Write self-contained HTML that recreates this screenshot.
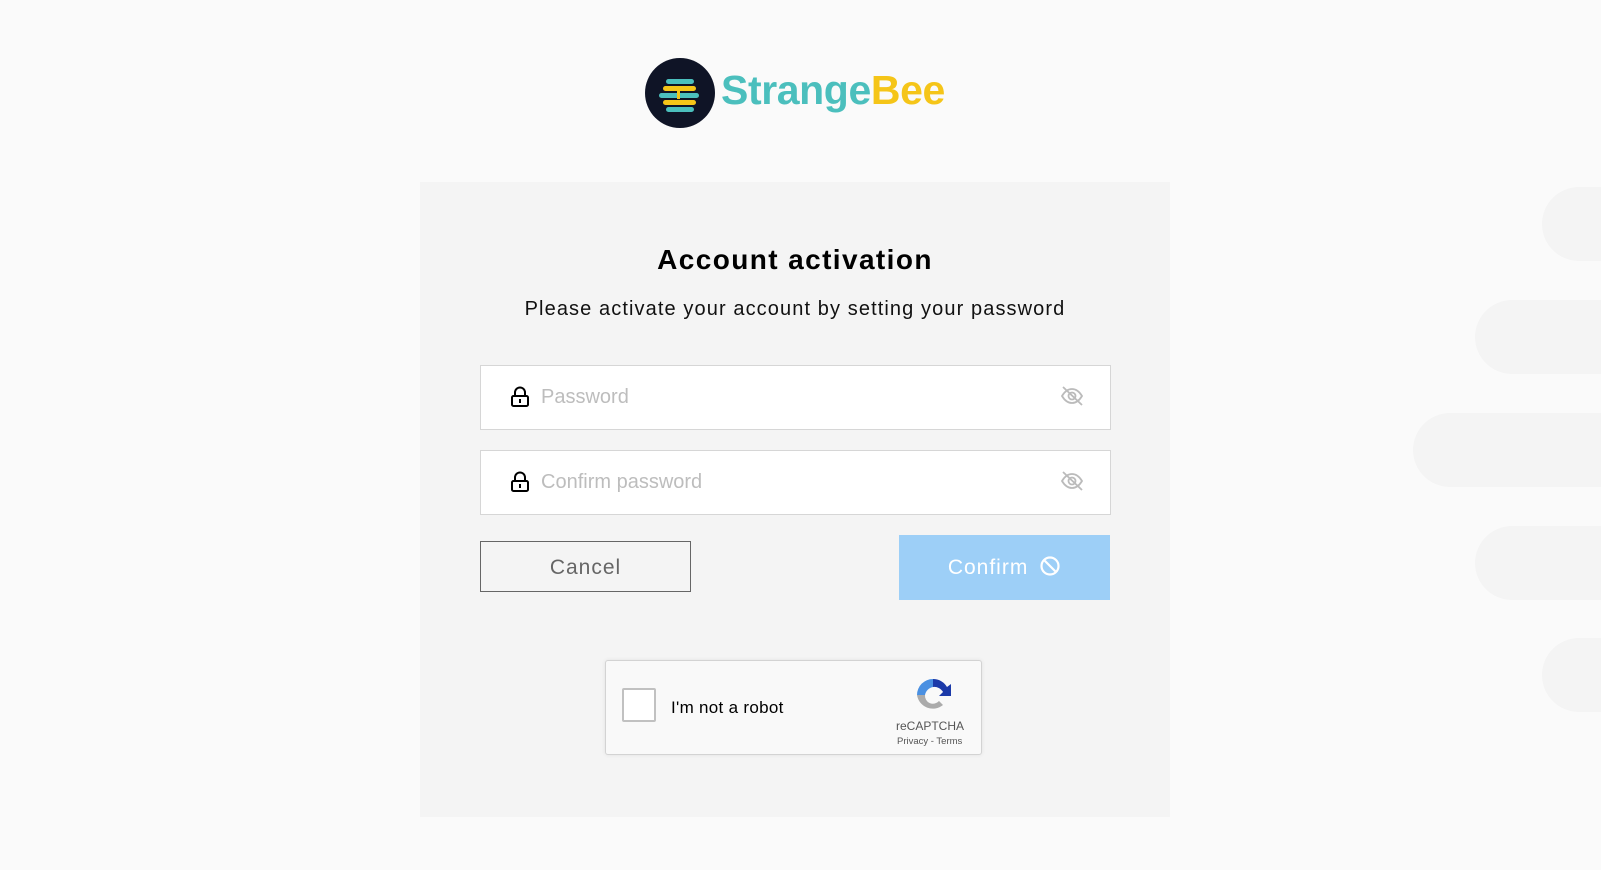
<!DOCTYPE html>
<html><head><meta charset="utf-8"><style>
html,body{margin:0;padding:0;width:1601px;height:870px;overflow:hidden;background:#fafafa;font-family:"Liberation Sans",sans-serif;position:relative}
.sh{position:absolute;background:#f4f4f4;border-radius:37px 0 0 37px;right:0;height:74px}
.card{position:absolute;left:420px;top:182px;width:750px;height:635px;background:#f4f4f4}
.abs{position:absolute}
h1{position:absolute;left:420px;width:750px;top:244px;margin:0;text-align:center;font-size:28px;font-weight:bold;color:#000;letter-spacing:1.4px}
.sub{position:absolute;left:420px;width:750px;top:298px;text-align:center;font-size:20px;color:#111;letter-spacing:1.1px}
.inp{position:absolute;left:480px;width:629px;height:63px;background:#fff;border:1px solid #d6d6d6}
.inp span{position:absolute;left:60px;top:20px;font-size:20px;color:#bdbdbd}
.inp .lock{position:absolute;left:29px;top:20px}
.inp .eye{position:absolute;left:579px;top:20px}
</style></head><body>
<div class="sh" style="top:187px;width:59px"></div>
<div class="sh" style="top:300px;width:126px"></div>
<div class="sh" style="top:413px;width:188px"></div>
<div class="sh" style="top:526px;width:126px"></div>
<div class="sh" style="top:638px;width:59px"></div>

<svg class="abs" style="left:644px;top:57px" width="72" height="72" viewBox="0 0 72 72">
<circle cx="36" cy="36" r="35" fill="#0f1426"/>
<rect x="22" y="22" width="28" height="5" rx="2.5" fill="#4bbfbd"/>
<rect x="19" y="29" width="33" height="5" rx="2.5" fill="#f5c518"/>
<rect x="15" y="36" width="40" height="5" rx="2.5" fill="#4bbfbd"/>
<rect x="19" y="43" width="33" height="5" rx="2.5" fill="#f5c518"/>
<rect x="22" y="50" width="28" height="5" rx="2.5" fill="#4bbfbd"/>
<rect x="33" y="33" width="3" height="9" fill="#f5c518"/>
</svg>
<div class="abs" style="left:721px;top:67px;font-size:41px;font-weight:bold;letter-spacing:-0.4px"><span style="color:#4bbfbd">Strange</span><span style="color:#f5c518">Bee</span></div>

<div class="card"></div>
<h1>Account activation</h1>
<div class="sub">Please activate your account by setting your password</div>

<div class="inp" style="top:365px">
<svg class="lock" width="20" height="22" viewBox="0 0 20 22"><path d="M5 10V6.5a5 5 0 0 1 10 0V10" fill="none" stroke="#000" stroke-width="2"/><rect x="2" y="10" width="16" height="10" rx="1.5" fill="none" stroke="#000" stroke-width="2"/><rect x="9" y="13" width="2" height="4" fill="#000"/></svg>
<span>Password</span>
<svg class="eye" width="24" height="20" viewBox="0 0 24 20"><path d="M2 10c3-5 6-7 10-7s7 2 10 7c-3 5-6 7-10 7s-7-2-10-7z" fill="none" stroke="#bbb" stroke-width="1.8"/><circle cx="12" cy="10" r="3.5" fill="none" stroke="#bbb" stroke-width="1.8"/><path d="M3 1l19 18" stroke="#bbb" stroke-width="1.8"/></svg>
</div>
<div class="inp" style="top:450px">
<svg class="lock" width="20" height="22" viewBox="0 0 20 22"><path d="M5 10V6.5a5 5 0 0 1 10 0V10" fill="none" stroke="#000" stroke-width="2"/><rect x="2" y="10" width="16" height="10" rx="1.5" fill="none" stroke="#000" stroke-width="2"/><rect x="9" y="13" width="2" height="4" fill="#000"/></svg>
<span>Confirm password</span>
<svg class="eye" width="24" height="20" viewBox="0 0 24 20"><path d="M2 10c3-5 6-7 10-7s7 2 10 7c-3 5-6 7-10 7s-7-2-10-7z" fill="none" stroke="#bbb" stroke-width="1.8"/><circle cx="12" cy="10" r="3.5" fill="none" stroke="#bbb" stroke-width="1.8"/><path d="M3 1l19 18" stroke="#bbb" stroke-width="1.8"/></svg>
</div>

<div class="abs" style="left:480px;top:541px;width:209px;height:49px;border:1px solid #666;text-align:center;line-height:51px;font-size:21px;color:#666;letter-spacing:1px">Cancel</div>
<div class="abs" style="left:899px;top:535px;width:211px;height:65px;background:#9dcff7;color:#fff;font-size:21px;line-height:65px;text-align:center;letter-spacing:1px">Confirm <svg width="22" height="22" viewBox="0 0 22 22" style="vertical-align:-3px;margin-left:4px"><circle cx="11" cy="11" r="8.5" fill="none" stroke="#fff" stroke-width="2.2"/><path d="M5 5l12 12" stroke="#fff" stroke-width="2.2"/></svg></div>

<div class="abs" style="left:605px;top:660px;width:375px;height:93px;background:#f9f9f9;border:1px solid #d3d3d3;border-radius:3px;box-shadow:0 0 4px rgba(0,0,0,.08)">
<div class="abs" style="left:16px;top:27px;width:30px;height:30px;background:#fff;border:2px solid #c1c1c1;border-radius:2px"></div>
<div class="abs" style="left:65px;top:37px;font-size:17px;color:#000;letter-spacing:0.3px">I'm not a robot</div>
<svg class="abs" style="left:307px;top:14px" width="40" height="40" viewBox="0 0 40 40"><path d="M20 4a16 16 0 0 1 14 8l4-3v12H26l4-4a10 10 0 0 0-10-5z" fill="#1c3aa9"/><path d="M4 20A16 16 0 0 1 20 4v8a10 10 0 0 0-8 8z" fill="#4a90e2"/><path d="M4 20h8a8 8 0 0 0 14 6l4 4a16 16 0 0 1-26-10z" fill="#ababab"/></svg>
<div class="abs" style="left:290px;top:58px;font-size:12px;color:#555">reCAPTCHA</div>
<div class="abs" style="left:291px;top:75px;font-size:9.5px;color:#555">Privacy - Terms</div>
</div>
</body></html>
